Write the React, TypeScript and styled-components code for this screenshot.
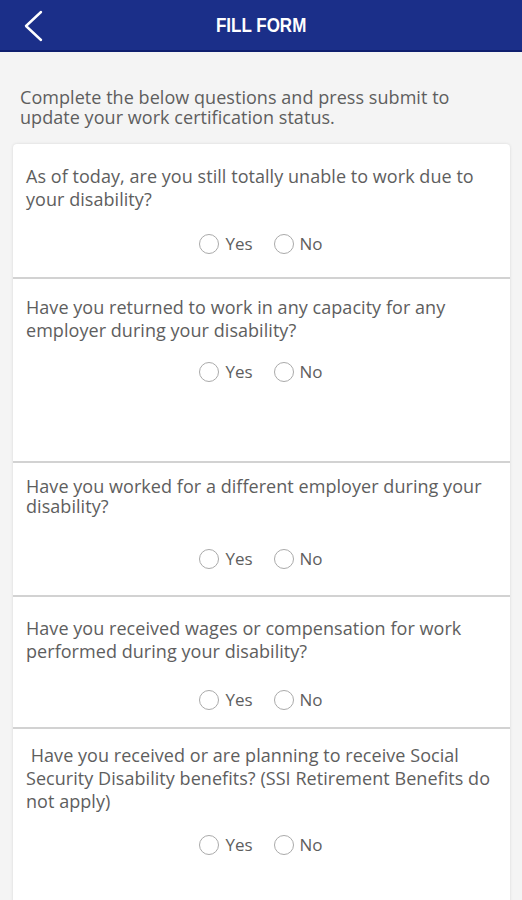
import React from 'react';
import styled, { createGlobalStyle } from 'styled-components';

const GlobalStyle = createGlobalStyle`
  html, body {
    margin: 0;
    padding: 0;
    background: #f4f4f4;
  }
  body {
    font-family: "Open Sans", "Liberation Sans", Arial, sans-serif;
  }
`;

const Page = styled.div`
  width: 522px;
  min-height: 900px;
  background: #f4f4f4;
  overflow: hidden;
`;

const Header = styled.header`
  height: 50px;
  background: #1b2f89;
  border-bottom: 2px solid #0f1f6e;
  display: flex;
  align-items: center;
  justify-content: center;
  position: relative;
`;

const BackButton = styled.button`
  position: absolute;
  left: 18px;
  top: 7px;
  width: 30px;
  height: 38px;
  padding: 0;
  border: none;
  background: transparent;
  display: flex;
  align-items: center;
  justify-content: center;
  cursor: pointer;
`;

const Title = styled.h1`
  margin: 0;
  color: #ffffff;
  font-family: "Liberation Sans", Arial, sans-serif;
  font-size: 20px;
  font-weight: 700;
  transform: scaleX(0.85);
`;

const Intro = styled.p`
  margin: 0;
  padding: 35px 20px 17px 20px;
  font-size: 18px;
  line-height: 20px;
  color: #5e5e5e;
  letter-spacing: 0.05px;
`;

const Card = styled.div`
  margin: 0 12px 0 13px;
  background: #ffffff;
  border-radius: 4px 4px 0 0;
  box-shadow: 0 0 3px rgba(0, 0, 0, 0.12);
`;

const Row = styled.div<{ $pt: number; $gap: number; $h: number; $lh: number }>`
  box-sizing: border-box;
  height: ${({ $h }) => $h}px;
  padding: ${({ $pt }) => $pt}px 14px 0 13px;
  border-bottom: 2px solid #d2d2d2;
  display: flex;
  flex-direction: column;
  gap: ${({ $gap }) => $gap}px;

  &:last-child {
    border-bottom: none;
  }

  p {
    line-height: ${({ $lh }) => $lh}px;
  }
`;

const Question = styled.p`
  margin: 0;
  font-size: 18px;
  color: #5e5e5e;
  letter-spacing: 0.05px;
`;

const Options = styled.div`
  display: flex;
  justify-content: center;
  gap: 21px;
`;

const Option = styled.label`
  display: flex;
  align-items: center;
  gap: 6px;
  font-size: 17px;
  line-height: 22px;
  color: #5e5e5e;
  cursor: pointer;
`;

const Radio = styled.span`
  width: 20px;
  height: 20px;
  border-radius: 50%;
  border: 1.5px solid #aaaaaa;
  box-sizing: border-box;
`;

const questions = [
  { text: 'As of today, are you still totally unable to work due to your disability?', pt: 21, gap: 22, h: 135, lh: 23 },
  { text: 'Have you returned to work in any capacity for any employer during your disability?', pt: 17, gap: 19, h: 184, lh: 23 },
  { text: 'Have you worked for a different employer during your disability?', pt: 13, gap: 32, h: 134, lh: 20 },
  { text: 'Have you received wages or compensation for work performed during your disability?', pt: 20, gap: 26, h: 132, lh: 23 },
  { text: '\u00a0Have you received or are planning to receive Social Security Disability benefits? (SSI Retirement Benefits do not apply)', pt: 15, gap: 21, h: 200, lh: 23 },
];

const App: React.FC = () => {
  return (
    <Page>
      <GlobalStyle />
      <Header>
        <BackButton aria-label="Back">
          <svg width="22" height="32" viewBox="0 0 22 32">
            <path d="M19 2 L4 16 L19 30" fill="none" stroke="#ffffff" strokeWidth="2.4" strokeLinecap="round" strokeLinejoin="round" />
          </svg>
        </BackButton>
        <Title>FILL FORM</Title>
      </Header>
      <Intro>Complete the below questions and press submit to update your work certification status.</Intro>
      <Card>
        {questions.map((q, i) => (
          <Row key={i} $pt={q.pt} $gap={q.gap} $h={q.h} $lh={q.lh}>
            <Question>{q.text}</Question>
            <Options>
              <Option>
                <Radio />
                Yes
              </Option>
              <Option>
                <Radio />
                No
              </Option>
            </Options>
          </Row>
        ))}
      </Card>
    </Page>
  );
};

export default App;
